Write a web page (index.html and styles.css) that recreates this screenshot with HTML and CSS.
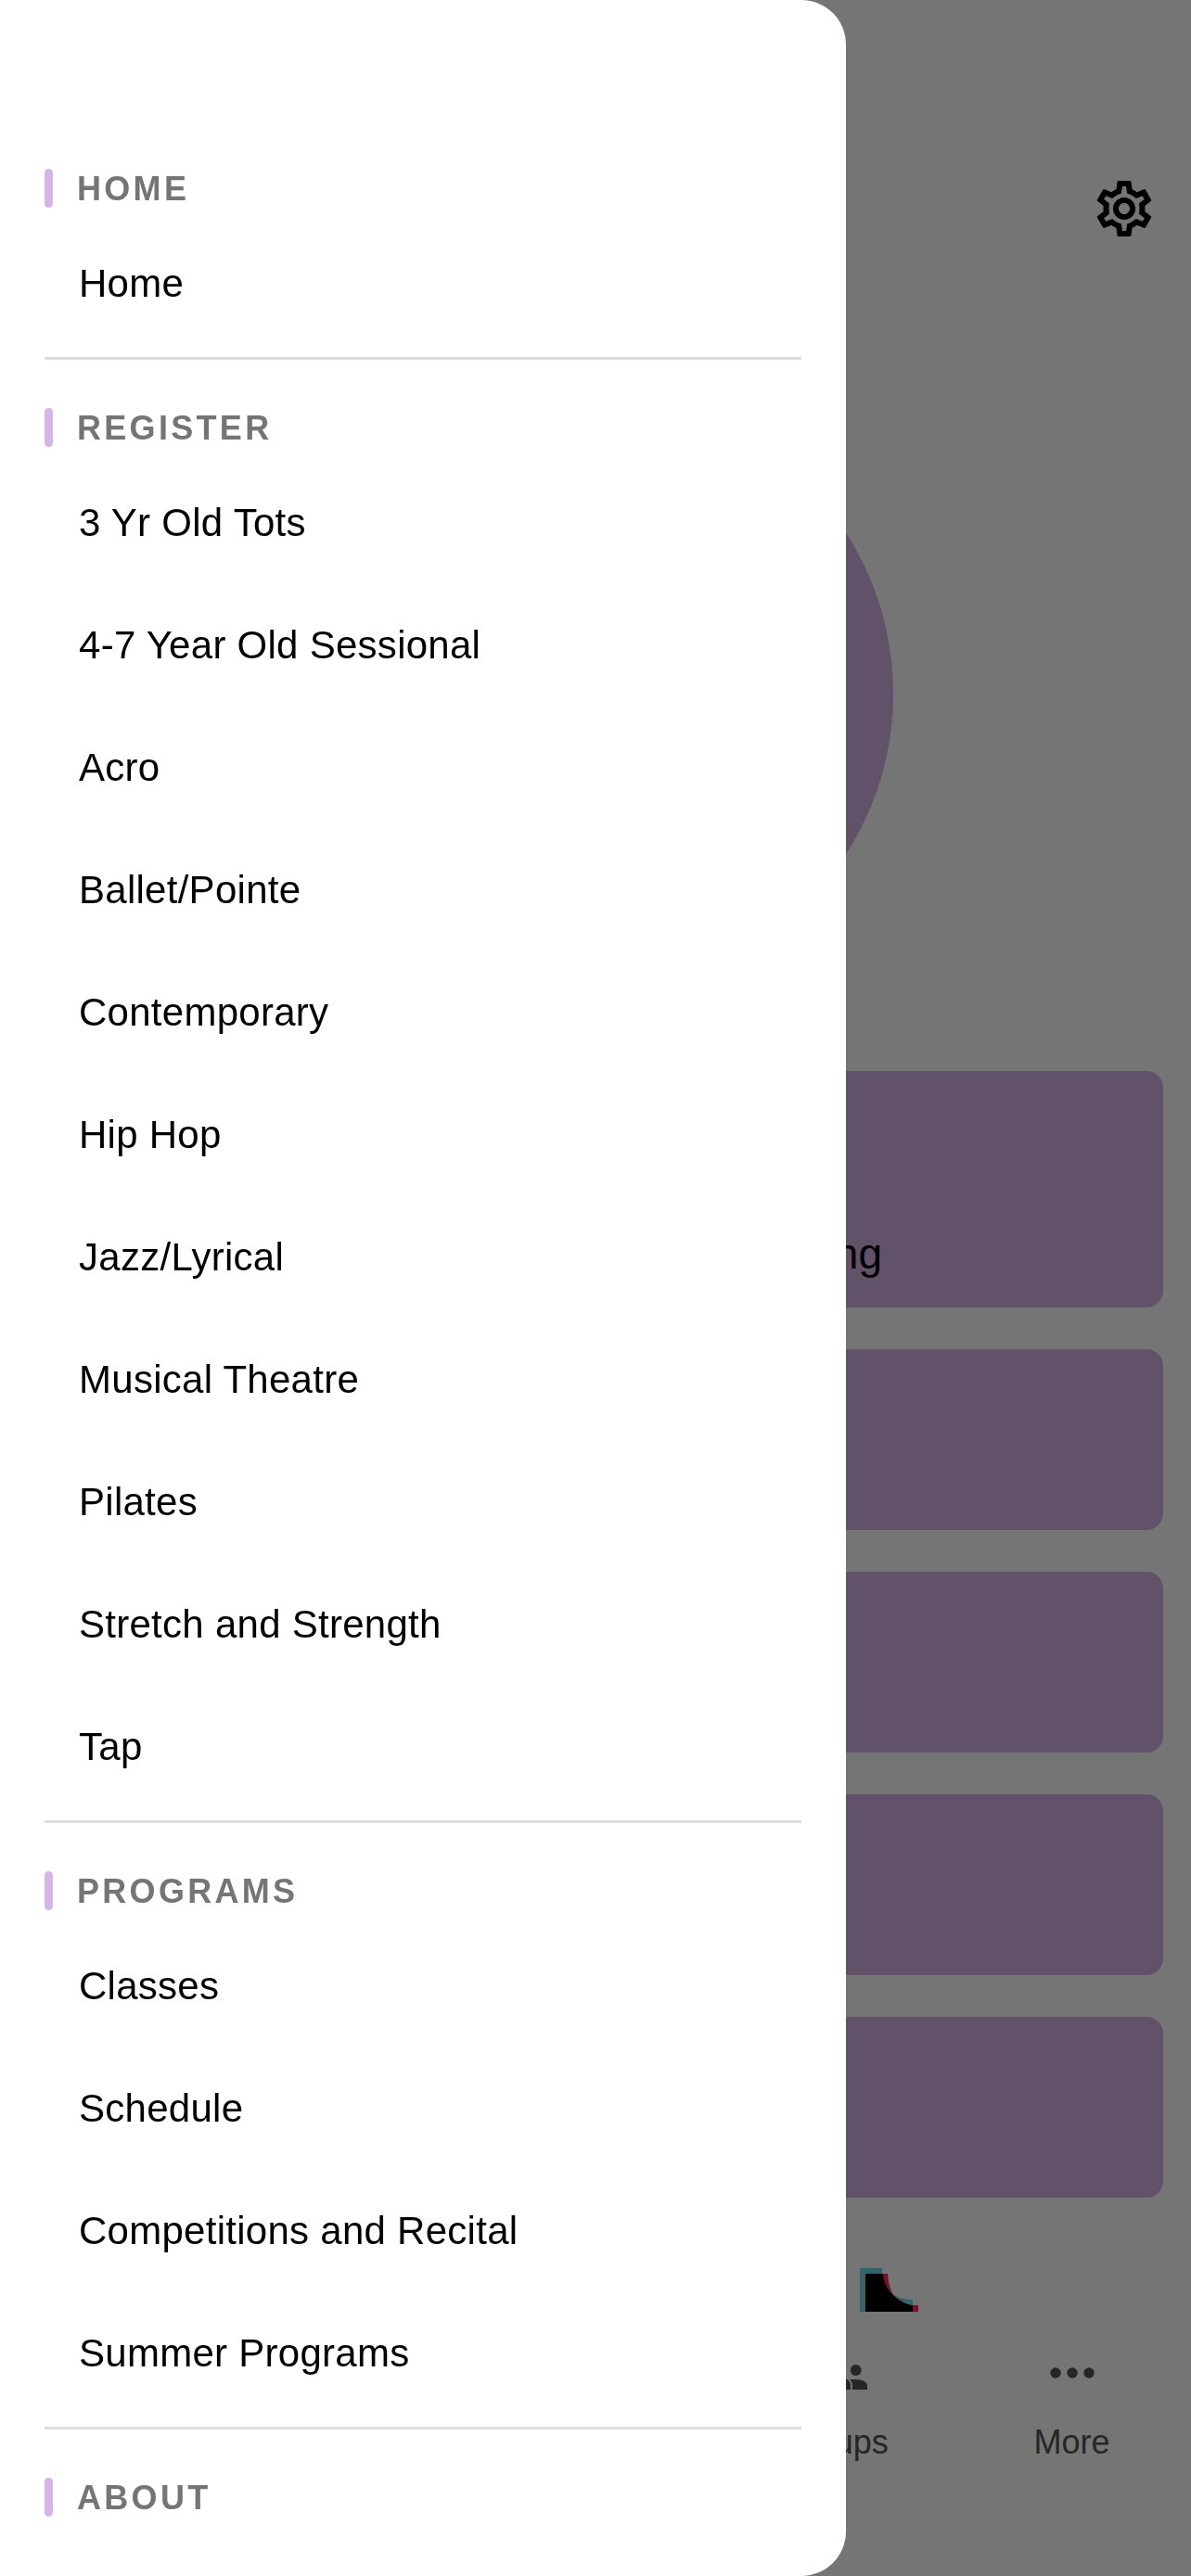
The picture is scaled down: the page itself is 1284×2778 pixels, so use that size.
FILE: index.html
```html
<!DOCTYPE html>
<html lang="en">
<head>
    <meta charset="UTF-8">
    <meta name="viewport" content="width=device-width, initial-scale=1.0">
    <title>Studio Menu</title>
    <link rel="stylesheet" href="styles.css">
</head>
<body>
    <div class="app">
        <main class="content">
            <div class="top-row">
                <svg class="gear" viewBox="0 0 24 24" aria-label="Settings">
                    <path d="M19.43 12.98c.04-.32.07-.64.07-.98 0-.34-.03-.66-.07-.98l2.11-1.65c.19-.15.24-.42.12-.64l-2-3.46c-.09-.16-.26-.25-.44-.25-.06 0-.12.01-.17.03l-2.49 1c-.52-.4-1.08-.73-1.69-.98l-.38-2.65C14.46 2.18 14.25 2 14 2h-4c-.25 0-.46.18-.49.42l-.38 2.65c-.61.25-1.17.59-1.69.98l-2.49-1c-.06-.02-.12-.03-.18-.03-.17 0-.34.09-.43.25l-2 3.46c-.13.22-.07.49.12.64l2.11 1.65c-.04.32-.07.65-.07.98 0 .33.03.66.07.98l-2.11 1.65c-.19.15-.24.42-.12.64l2 3.46c.09.16.26.25.44.25.06 0 .12-.01.17-.03l2.49-1c.52.4 1.08.73 1.69.98l.38 2.65c.03.24.24.42.49.42h4c.25 0 .46-.18.49-.42l.38-2.65c.61-.25 1.17-.59 1.69-.98l2.49 1c.06.02.12.03.18.03.17 0 .34-.09.43-.25l2-3.46c.12-.22.07-.49-.12-.64l-2.11-1.65zm-1.98-1.71c.04.31.05.52.05.73 0 .21-.02.43-.05.73l-.14 1.13.89.7 1.08.84-.7 1.21-1.27-.51-1.04-.42-.9.68c-.43.32-.84.56-1.25.73l-1.06.43-.16 1.13-.2 1.35h-1.4l-.19-1.35-.16-1.13-1.06-.43c-.43-.18-.83-.41-1.23-.71l-.91-.7-1.06.43-1.27.51-.7-1.21 1.08-.84.89-.7-.14-1.13c-.03-.31-.05-.54-.05-.74s.02-.43.05-.73l.14-1.13-.89-.7-1.08-.84.7-1.21 1.27.51 1.04.42.9-.68c.43-.32.84-.56 1.25-.73l1.06-.43.16-1.13.2-1.35h1.39l.19 1.35.16 1.13 1.06.43c.43.18.83.41 1.23.71l.91.7 1.06-.43 1.27-.51.7 1.21-1.07.85-.89.7.14 1.13zM12 8c-2.21 0-4 1.79-4 4s1.79 4 4 4 4-1.79 4-4-1.79-4-4-4zm0 6c-1.1 0-2-.9-2-2s.9-2 2-2 2 .9 2 2-.9 2-2 2z"/>
                </svg>
            </div>
            <div class="hero-circle"></div>
            <div class="cards">
                <div class="card card-tall"><span class="card-label">ng</span></div>
                <div class="card"></div>
                <div class="card"></div>
                <div class="card"></div>
                <div class="card"></div>
            </div>
            <svg class="social-logo" viewBox="0 0 63 47" aria-hidden="true">
                <path class="logo-teal" d="M0 0H24C24.5 10 28 22 36 29C42 32 50 34 57 34V47H0Z"/>
                <path class="logo-red" d="M12 6H30C30.5 14 32 22 36 29C42 35 50 39.5 57 40H63V47H12Z"/>
                <path d="M6 6H24.7C25.5 14 29 23 36 29C42 35 50 39.5 57 40V47H6Z"/>
            </svg>
        </main>

        <nav class="tabs">
            <div class="tab tab-groups">
                <svg class="tab-icon" viewBox="0 0 72 72" aria-hidden="true">
                    <circle cx="59.7" cy="33" r="6"/>
                    <path d="M56 54V50C56 47 55 45 53 43C55 43 57 43 60 43C67 43 72 46 72 50V54Z"/>
                    <circle cx="36" cy="28" r="9"/>
                    <path d="M18 54V49C18 43 26 40 36 40C46 40 54 43 54 49V54Z"/>
                </svg>
                <span class="tab-label">Groups</span>
            </div>
            <div class="tab">
                <svg class="tab-icon" viewBox="0 0 72 72" aria-hidden="true">
                    <circle cx="18" cy="36" r="5.7"/>
                    <circle cx="36" cy="36" r="5.7"/>
                    <circle cx="54" cy="36" r="5.7"/>
                </svg>
                <span class="tab-label">More</span>
            </div>
        </nav>

        <div class="scrim"></div>

        <aside class="drawer">
            <section class="menu-section">
                <h2 class="menu-title">HOME</h2>
                <a class="menu-item">Home</a>
            </section>
            <section class="menu-section">
                <h2 class="menu-title">REGISTER</h2>
                <a class="menu-item">3 Yr Old Tots</a>
                <a class="menu-item">4-7 Year Old Sessional</a>
                <a class="menu-item">Acro</a>
                <a class="menu-item">Ballet/Pointe</a>
                <a class="menu-item">Contemporary</a>
                <a class="menu-item">Hip Hop</a>
                <a class="menu-item">Jazz/Lyrical</a>
                <a class="menu-item">Musical Theatre</a>
                <a class="menu-item">Pilates</a>
                <a class="menu-item">Stretch and Strength</a>
                <a class="menu-item">Tap</a>
            </section>
            <section class="menu-section">
                <h2 class="menu-title">PROGRAMS</h2>
                <a class="menu-item">Classes</a>
                <a class="menu-item">Schedule</a>
                <a class="menu-item">Competitions and Recital</a>
                <a class="menu-item">Summer Programs</a>
            </section>
            <section class="menu-section">
                <h2 class="menu-title">ABOUT</h2>
            </section>
        </aside>
    </div>
</body>
</html>
```

FILE: styles.css
```css
:root {
    --lilac: #d5b4e4;
    --marker: #d4b5e8;
    --divider: #dedede;
    --muted: #757575;
    --tab-ink: #535353;
}

* {
    box-sizing: border-box;
}

body {
    margin: 0;
    font-family: "Liberation Sans", Arial, sans-serif;
    background-color: #ffffff;
    color: #000000;
}

.app {
    position: relative;
    display: flex;
    flex-direction: column;
    height: 100vh;
    overflow: hidden;
}

/* Page behind the drawer */
.content {
    flex: 1;
    overflow: hidden;
    min-height: 0;
}

.top-row {
    display: flex;
    justify-content: flex-end;
    padding: 189px 36px 0 0;
}

.gear {
    width: 72px;
    height: 72px;
}

.hero-circle {
    width: 642px;
    height: 642px;
    margin: 166px auto 0;
    border-radius: 50%;
    background-color: var(--lilac);
}

.cards {
    display: flex;
    flex-direction: column;
    gap: 45px;
    margin-top: 86px;
    padding: 0 30px;
}

.card {
    height: 195px;
    border-radius: 18px;
    background-color: var(--lilac);
}

.card-tall {
    display: flex;
    align-items: flex-end;
    justify-content: flex-end;
    height: 255px;
    padding: 0 303px 30px 0;
}

.card-label {
    font-size: 46px;
    line-height: 56px;
}

.social-logo {
    display: block;
    width: 63px;
    height: 47px;
    margin: 76px 0 0 927px;
}

.logo-teal {
    fill: #6dd9e4;
}

.logo-red {
    fill: #ff2358;
}

/* Bottom tabs: five columns, only the last two show past the drawer */
.tabs {
    display: grid;
    grid-template-columns: repeat(5, 1fr);
    height: 285px;
    padding-top: 29px;
    border-top: 1px solid #fbfbfb;
}

.tab {
    display: flex;
    flex-direction: column;
    align-items: center;
    gap: 18px;
}

.tab-groups {
    grid-column: 4;
}

.tab-icon {
    width: 72px;
    height: 72px;
    fill: var(--tab-ink);
}

.tab-label {
    font-size: 36px;
    line-height: 42px;
    color: var(--tab-ink);
}

.scrim {
    position: absolute;
    inset: 0;
    background-color: rgba(0, 0, 0, 0.54);
}

/* Drawer */
.drawer {
    position: absolute;
    top: 0;
    left: 0;
    bottom: 0;
    width: 912px;
    padding: 182px 48px 0;
    overflow: hidden;
    background-color: #ffffff;
    border-radius: 0 48px 48px 0;
    will-change: transform;
}

.menu-section {
    padding-bottom: 13px;
    border-bottom: 3px solid var(--divider);
    margin-bottom: 52px;
}

.menu-section:last-child {
    border-bottom: none;
}

.menu-title {
    position: relative;
    height: 42px;
    margin: 0 0 16px;
    padding-left: 35px;
    font-size: 36px;
    font-weight: 700;
    line-height: 44px;
    letter-spacing: 3.3px;
    color: var(--muted);
}

.menu-title::before {
    content: "";
    position: absolute;
    top: 0;
    left: 0;
    width: 9px;
    height: 42px;
    border-radius: 5px;
    background-color: var(--marker);
}

.menu-item {
    display: flex;
    align-items: center;
    height: 132px;
    padding-left: 37px;
    font-size: 42px;
    letter-spacing: 0.27px;
    color: #000000;
}
```
